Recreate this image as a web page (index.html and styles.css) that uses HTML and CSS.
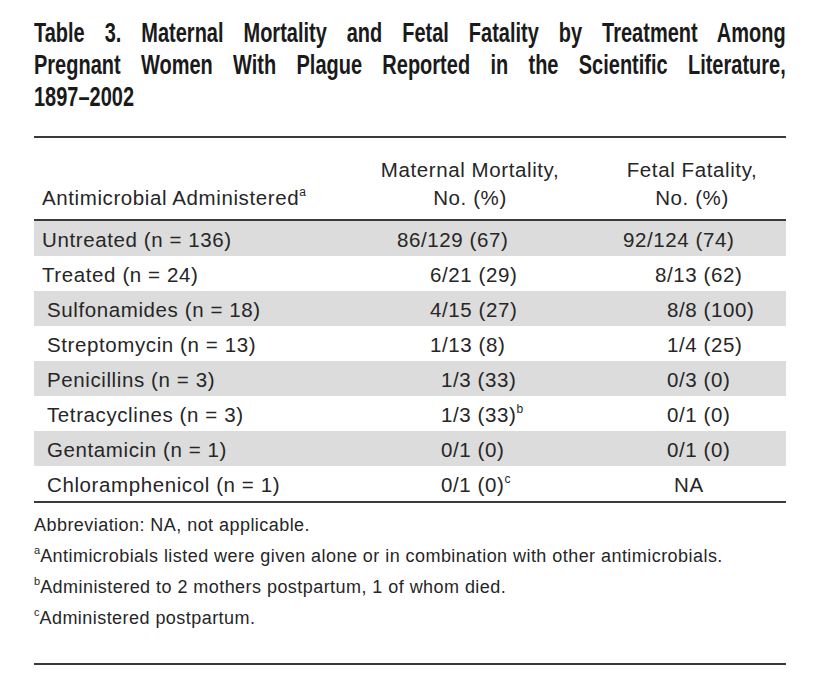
FILE: index.html
```html
<!DOCTYPE html>
<html lang="en">
<head>
<meta charset="utf-8">
<title>Table 3</title>
<link rel="stylesheet" href="styles.css">
</head>
<body>
<div class="page">
  <h1 class="title">
    <span class="tl">Table 3. Maternal Mortality and Fetal Fatality by Treatment Among</span>
    <span class="tl">Pregnant Women With Plague Reported in the Scientific Literature,</span>
    <span class="tl last">1897–2002</span>
  </h1>

  <div class="table">
    <div class="thead">
      <div class="th th-name">Antimicrobial Administered<sup>a</sup></div>
      <div class="th th-mat">Maternal Mortality,<br>No. (%)</div>
      <div class="th th-fet">Fetal Fatality,<br>No. (%)</div>
    </div>

    <div class="row shade">
      <div class="c1">Untreated (n = 136)</div>
      <div class="c2">86/129 (67)</div>
      <div class="c3">92/124 (74)</div>
    </div>
    <div class="row">
      <div class="c1">Treated (n = 24)</div>
      <div class="c2 m2">6/21 (29)</div>
      <div class="c3 f2">8/13 (62)</div>
    </div>
    <div class="row shade">
      <div class="c1 sub">Sulfonamides (n = 18)</div>
      <div class="c2 m2">4/15 (27)</div>
      <div class="c3 f3">8/8 (100)</div>
    </div>
    <div class="row">
      <div class="c1 sub">Streptomycin (n = 13)</div>
      <div class="c2 m2">1/13 (8)</div>
      <div class="c3 f3">1/4 (25)</div>
    </div>
    <div class="row shade">
      <div class="c1 sub">Penicillins (n = 3)</div>
      <div class="c2 m3">1/3 (33)</div>
      <div class="c3 f3">0/3 (0)</div>
    </div>
    <div class="row">
      <div class="c1 sub">Tetracyclines (n = 3)</div>
      <div class="c2 m3">1/3 (33)<sup>b</sup></div>
      <div class="c3 f3">0/1 (0)</div>
    </div>
    <div class="row shade">
      <div class="c1 sub">Gentamicin (n = 1)</div>
      <div class="c2 m3">0/1 (0)</div>
      <div class="c3 f3">0/1 (0)</div>
    </div>
    <div class="row">
      <div class="c1 sub">Chloramphenicol (n = 1)</div>
      <div class="c2 m3">0/1 (0)<sup>c</sup></div>
      <div class="c3 f4">NA</div>
    </div>
  </div>

  <div class="notes">
    <p class="note">Abbreviation: NA, not applicable.</p>
    <p class="note"><sup>a</sup>Antimicrobials listed were given alone or in combination with other antimicrobials.</p>
    <p class="note"><sup>b</sup>Administered to 2 mothers postpartum, 1 of whom died.</p>
    <p class="note"><sup>c</sup>Administered postpartum.</p>
  </div>
</div>
</body>
</html>
```

FILE: styles.css
```css
html, body {
  margin: 0;
  padding: 0;
  background: #ffffff;
}

.page {
  width: 752px;
  margin-left: 34px;
  padding-top: 17px;
  color: #262626;
  font-family: "Liberation Sans", Arial, sans-serif;
}

.title {
  margin: 0;
  font-family: "Liberation Sans", Arial, sans-serif;
  font-weight: 700;
  font-size: 27.5px;
  line-height: 32px;
  color: #1a1a1a;
}

/* condensed bold face is not installed: compress a regular bold line */
.tl {
  display: block;
  width: 1034px;
  white-space: nowrap;
  text-align: justify;
  text-align-last: justify;
  transform: scaleX(0.727);
  transform-origin: 0 0;
}

.tl.last {
  text-align: left;
  text-align-last: left;
}

.table {
  margin-top: 23px;
  border-top: 2px solid #3a3a3a;
  border-bottom: 2px solid #3a3a3a;
  font-size: 20.5px;
  letter-spacing: 0.6px;
}

.thead {
  display: grid;
  grid-template-columns: 330px 212px 1fr;
  padding: 18px 0 7px;
  border-bottom: 2px solid #3a3a3a;
  line-height: 28px;
}

.th-name {
  align-self: end;
  padding-left: 8px;
}

.th-mat {
  text-align: center;
}

.th-fet {
  text-align: center;
  padding-left: 22px;
}

sup {
  font-size: 12px;
  line-height: 0;
  letter-spacing: 0;
  vertical-align: 0;
  position: relative;
  top: -9px;
}

.row {
  display: grid;
  grid-template-columns: 363px 226px 1fr;
  height: 35px;
  box-sizing: border-box;
  padding-top: 3px;
  line-height: 32px;
  white-space: nowrap;
}

.row.shade {
  background: #dcdcdc;
}

.c1 {
  padding-left: 8px;
}

.c1.sub {
  padding-left: 13px;
}

.c2.m2 { padding-left: 33px; }
.c2.m3 { padding-left: 44px; }
.c3.f2 { padding-left: 32px; }
.c3.f3 { padding-left: 44px; }
.c3.f4 { padding-left: 51px; }

.notes {
  padding-top: 7px;
  padding-bottom: 29px;
  border-bottom: 2px solid #3a3a3a;
}

.note {
  margin: 0;
  font-size: 18px;
  letter-spacing: 0.45px;
  line-height: 31px;
}

.note sup {
  font-size: 11px;
  letter-spacing: 0;
  top: -8px;
}
```
